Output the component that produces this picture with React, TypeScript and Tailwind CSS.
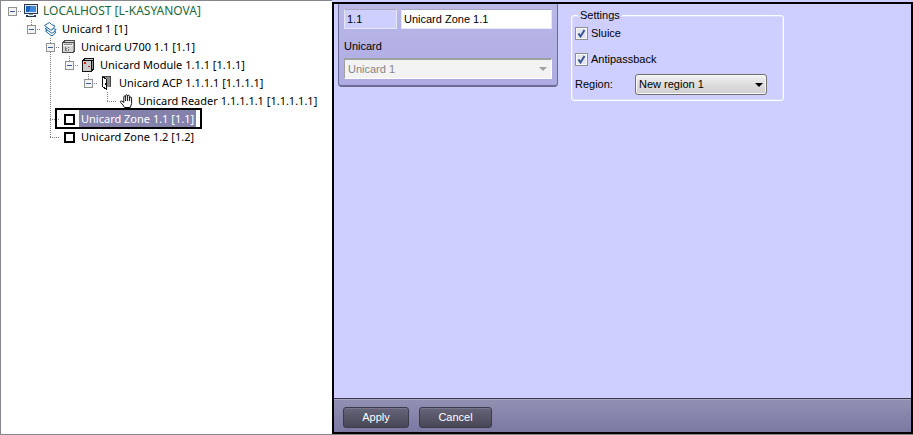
import { useState } from "react"
import type { ReactNode } from "react"

type Guide = "none" | "line" | "tee" | "corner" | "open" | "openLine"

type TreeRow = {
  label: string
  icon: ReactNode
  guides: Guide[]
  root?: boolean
}

const ComputerIcon = () => (
  <svg width="16" height="16" viewBox="0 0 16 16" shapeRendering="crispEdges">
    <rect x="1" y="1" width="14" height="10" fill="#28384c" />
    <rect x="2" y="2" width="12" height="8" fill="#dfe9f5" />
    <rect x="3" y="3" width="10" height="6" fill="#1762b8" />
    <path d="M8 3h5v6H6z" fill="#3f8bd8" />
    <rect x="6" y="11" width="4" height="2" fill="#8995a5" />
    <rect x="3" y="12" width="10" height="2" fill="#28384c" />
    <rect x="5" y="12" width="6" height="1" fill="#dfe9f5" />
  </svg>
)

const LayersIcon = () => (
  <svg width="16" height="16" viewBox="0 0 16 16" fill="#fff" stroke="#1d66a8" strokeLinejoin="round">
    <path d="M3.500 10 7 9l7 2-3 3.500H9z" />
    <path d="M3 7.500 7 6l7 2.500L11 12H9.500z" />
    <path d="M2.500 4.500 7.500 1.500l2 2 3.500 1.500-3 4H8.500z" />
  </svg>
)

const ControllerIcon = () => (
  <svg width="16" height="16" viewBox="0 0 16 16" shapeRendering="crispEdges">
    <path d="M3 1h11v11l-2 2H1V3z" fill="#4a4a4a" />
    <path d="M4 2h9l-1 1H3z" fill="#d8d8d8" />
    <rect x="2" y="4" width="10" height="9" fill="#d4d4d4" />
    <rect x="2" y="6" width="10" height="1" fill="#fff" />
    <rect x="3" y="5" width="8" height="1" fill="#8a8a8a" />
    <path d="M4 8h1v1h1v1H5v1h1v1H4zM7 8h1v1H7zM7 10h1v2H7z" fill="#777" />
    <path d="M12 4h1v8h-1z" fill="#9a9a9a" />
  </svg>
)

const ModuleIcon = () => (
  <svg width="16" height="16" viewBox="0 0 16 16" shapeRendering="crispEdges">
    <path d="M4 1h10v11l-2 3H2V3z" fill="#111" />
    <path d="M5 2h8l-1 1H4z" fill="#c4c4c4" />
    <rect x="3" y="4" width="8" height="10" fill="#cccccc" />
    <path d="M12 4h1v8h-1z" fill="#999" />
    <rect x="4" y="5" width="2" height="2" fill="#e11919" />
    <rect x="8" y="9" width="2" height="1" fill="#a33" />
  </svg>
)

const DoorIcon = () => (
  <svg width="16" height="16" viewBox="0 0 16 16" shapeRendering="crispEdges">
    <path d="M3 1h9v11H3z" fill="#444" />
    <path d="M5 2h6v10H5z" fill="#8c8c8c" />
    <path d="M3.500 1.500l4 3v10l-4-3z" fill="#fff" stroke="#111" />
    <rect x="6" y="8" width="1" height="2" fill="#111" />
  </svg>
)

const HandIcon = () => (
  <svg width="16" height="16" viewBox="0 0 16 16" fill="#fff" stroke="#111" strokeLinejoin="round">
    <path d="M6.500 14.500 5 12 2.500 9.300C2 8.300 3 7.500 4 8.200L5.800 9.500V4c0-1.300 1.700-1.300 1.800 0V2.800c0-1.400 1.900-1.400 2 0v.4c.1-1.200 1.900-1.200 2 0v1.600c.2-1.100 1.900-1 2 .2V10.500L12.300 14.500z" />
    <path d="M7.600 4v4M9.600 3v5M11.600 4v4" fill="none" />
  </svg>
)

const ZoneIcon = () => (
  <svg width="16" height="16" viewBox="0 0 16 16" shapeRendering="crispEdges">
    <rect x="4" y="4" width="9" height="9" fill="#fff" stroke="#000" strokeWidth="2" />
  </svg>
)

const rows: TreeRow[] = [
  { label: "LOCALHOST [L-KASYANOVA]", icon: <ComputerIcon />, guides: ["none"], root: true },
  { label: "Unicard 1 [1]", icon: <LayersIcon />, guides: ["none", "open"] },
  { label: "Unicard U700 1.1 [1.1]", icon: <ControllerIcon />, guides: ["none", "none", "openLine"] },
  { label: "Unicard Module 1.1.1 [1.1.1]", icon: <ModuleIcon />, guides: ["none", "none", "line", "open"] },
  { label: "Unicard ACP 1.1.1.1 [1.1.1.1]", icon: <DoorIcon />, guides: ["none", "none", "line", "none", "open"] },
  {
    label: "Unicard Reader 1.1.1.1.1 [1.1.1.1.1]",
    icon: <HandIcon />,
    guides: ["none", "none", "line", "none", "none", "corner"],
  },
  { label: "Unicard Zone 1.1 [1.1]", icon: <ZoneIcon />, guides: ["none", "none", "tee"] },
  { label: "Unicard Zone 1.2 [1.2]", icon: <ZoneIcon />, guides: ["none", "none", "corner"] },
]

function GuideLines({ kind, expander }: { kind: Guide; expander?: boolean }) {
  const full = kind === "line" || kind === "tee" || kind === "openLine"
  const half = kind === "corner" || kind === "open"
  const branch = expander || kind === "tee" || kind === "corner"
  return (
    <svg width="19" height="18" viewBox="0 0 19 18" shapeRendering="crispEdges" className="block">
      <g stroke="#808080" strokeDasharray="1 1">
        {(full || half) && <path d={full ? "M9.500 0V18" : "M9.500 0V10"} />}
        {branch && <path d="M9 9.500H20" />}
      </g>
      {expander && (
        <>
          <rect x="5.500" y="5.500" width="8" height="8" fill="#f4f4f4" stroke="#919191" />
          <path d="M7 9.500h5" stroke="#3a5a9c" />
        </>
      )}
    </svg>
  )
}

function TreeItem({ row, selected, onSelect }: { row: TreeRow; selected: boolean; onSelect: () => void }) {
  const last = row.guides.length - 1
  const leaf = row.guides[last] === "tee" || row.guides[last] === "corner"
  return (
    <li className="flex h-[18px] items-center">
      {row.guides.map((kind, i) =>
        i === last && !leaf ? (
          <button key={i} type="button" aria-label={`Collapse ${row.label}`} className="shrink-0">
            <GuideLines kind={kind} expander />
          </button>
        ) : (
          <span key={i} className="shrink-0">
            <GuideLines kind={kind} />
          </span>
        ),
      )}
      <button type="button" onClick={onSelect} className="relative flex h-[18px] items-center whitespace-nowrap">
        <span className="w-[19px] pl-px">{row.icon}</span>
        <span
          className={`px-0.5 leading-[18px] ${selected ? "bg-[#8482ab] text-white" : row.root ? "text-[12px] text-[#1c6a3c]" : "text-black"}`}
        >
          {row.label}
        </span>
        {selected && <span className="absolute -top-0.5 -right-[6px] -bottom-px -left-[5px] border-2 border-black" />}
      </button>
    </li>
  )
}

function Check({ label }: { label: string }) {
  return (
    <label className="flex h-[14px] items-center gap-[3px]">
      <span className="relative block size-[13px]">
        <input
          type="checkbox"
          defaultChecked
          className="peer block size-[13px] appearance-none border border-[#8e8f8f] bg-[#e4e6ee] shadow-[inset_0_0_0_1px_#f8f8f8]"
        />
        <svg
          viewBox="0 0 13 13"
          className="pointer-events-none absolute inset-0 hidden size-[13px] peer-checked:block"
          fill="none"
          stroke="#3c5296"
          strokeWidth="2"
        >
          <path d="M3.500 6.500 5.500 9.500 9.500 3" />
        </svg>
      </span>
      {label}
    </label>
  )
}

const Arrow = ({ className }: { className: string }) => (
  <svg width="8" height="4" viewBox="0 0 8 4" className={`pointer-events-none absolute ${className}`}>
    <path d="M0 0h8L4 4z" fill="currentColor" />
  </svg>
)

const actionButton =
  "h-[21px] rounded-[3px] border border-[#3c3b4c] bg-linear-to-b from-[#66657a] to-[#484756] text-center text-white shadow-[inset_0_1px_0_#77768c]"

export default function App() {
  const [selected, setSelected] = useState(6)

  return (
    <div className="flex min-h-screen border-b border-[#85858d] bg-white font-['Liberation_Sans',Arial,sans-serif] text-[11px] text-black">
      <nav className="w-[332px] shrink-0 border-t border-l border-[#85858d] pt-px pl-0.5 font-['Noto_Sans','Open_Sans',sans-serif]">
        <ul>
          {rows.map((row, i) => (
            <TreeItem key={row.label} row={row} selected={selected === i} onSelect={() => setSelected(i)} />
          ))}
        </ul>
      </nav>

      <div className="flex min-w-0 flex-1 bg-[#cfcfff] pt-0.5">
        <main className="flex min-w-0 flex-1 flex-col border-2 border-black">
          <div className="flex flex-1 items-start gap-[13px] px-1">
            <section className="w-[220px] shrink-0 rounded-b-[4px] border-x border-b-2 border-[#6c6b92] bg-linear-to-b from-[#bab8e8] to-[#adabe2] px-[5px] pt-[5px] pb-[6px]">
              <div className="flex gap-1">
                <input
                  aria-label="Number"
                  readOnly
                  defaultValue="1.1"
                  className="h-5 w-[53px] border border-[#e6e6f4] border-t-[#a9a9bd] bg-[#cfcfff] px-0.5"
                />
                <input
                  aria-label="Name"
                  defaultValue="Unicard Zone 1.1"
                  className="h-5 min-w-0 flex-1 border border-[#e6e6f4] border-t-[#a9a9bd] bg-white px-0.5"
                />
              </div>
              <label htmlFor="parent" className="mt-[9px] block leading-4">
                Unicard
              </label>
              <div className="relative mt-1 text-[#858585]">
                <select
                  id="parent"
                  disabled
                  className="block h-[21px] w-full appearance-none border border-t-2 border-white border-t-[#a0a0a0] border-l-[#a0a0a0] bg-[#f3f3f3] px-[3px] opacity-100"
                >
                  <option>Unicard 1</option>
                </select>
                <Arrow className="top-[9px] right-[5px] text-[#a0a0a0]" />
              </div>
            </section>

            <fieldset className="mt-[3px] w-[213px] rounded-[3px] border border-white px-[3px] pb-[5px] shadow-[inset_0_0_0_1px_#dcdcff]">
              <legend className="ml-[3px] px-0.5 leading-4">Settings</legend>
              <div className="flex flex-col gap-3 pt-[3px]">
                <Check label="Sluice" />
                <Check label="Antipassback" />
              </div>
              <div className="mt-2 flex items-center">
                <label htmlFor="region" className="w-[60px]">
                  Region:
                </label>
                <div className="relative w-[132px]">
                  <select
                    id="region"
                    className="block h-[21px] w-full appearance-none rounded-[3px] border border-[#707070] bg-linear-to-b from-[#f2f2f2] from-0% via-[#dddddd] via-50% to-[#cfcfcf] px-[3px] shadow-[inset_0_0_0_1px_#f8f8f8]"
                  >
                    <option>New region 1</option>
                  </select>
                  <Arrow className="top-[9px] right-1" />
                </div>
              </div>
            </fieldset>
          </div>

          <footer className="flex h-[34px] items-center gap-[10px] border-t border-[#38374f] bg-linear-to-b from-[#9290b2] to-[#7b79a3] px-[9px] pt-1 shadow-[inset_0_1px_0_#aaa8c0]">
            <button type="button" className={`${actionButton} w-[66px]`}>
              Apply
            </button>
            <button type="button" className={`${actionButton} w-[73px]`}>
              Cancel
            </button>
          </footer>
        </main>
      </div>
    </div>
  )
}
